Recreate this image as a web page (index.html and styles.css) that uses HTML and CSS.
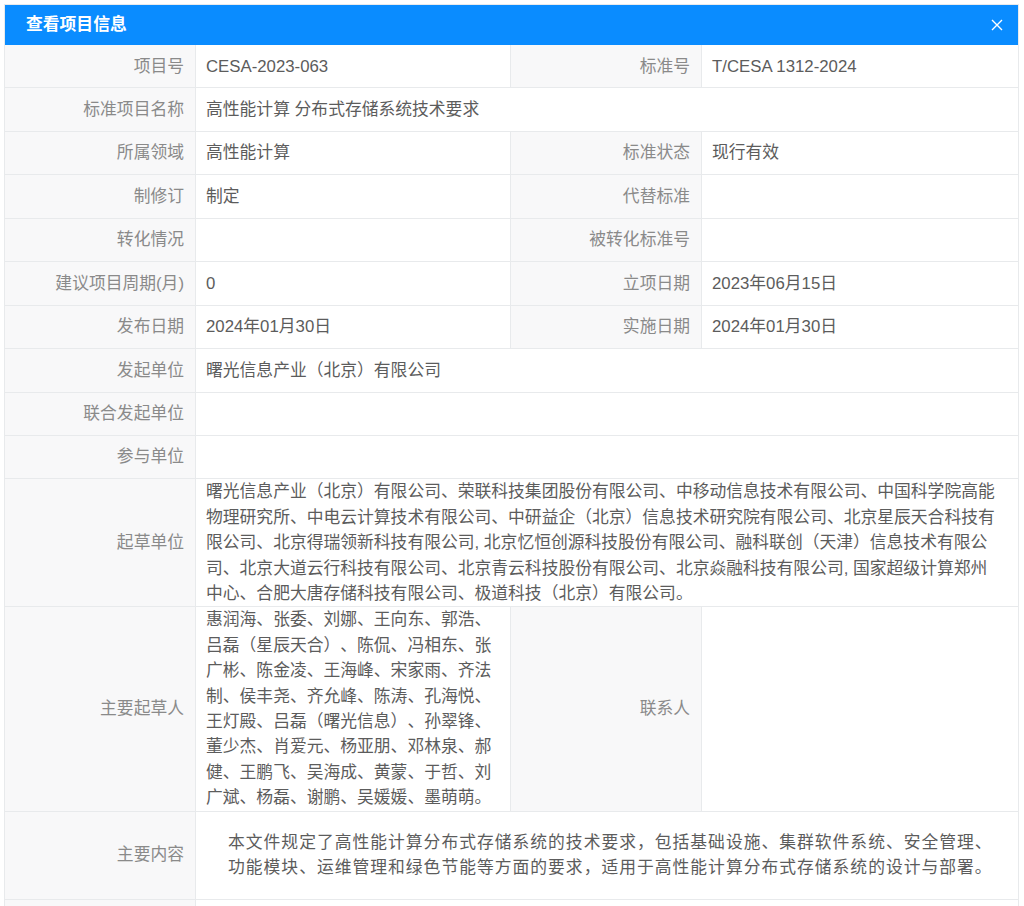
FILE: index.html
```html
<!DOCTYPE html>
<html lang="zh-CN">
<head>
<meta charset="utf-8">
<title>查看项目信息</title>
<link rel="stylesheet" href="styles.css">
</head>
<body>
<div class="modal">
  <div class="modal-header">
    <span class="modal-title">查看项目信息</span>
    <span class="modal-close" aria-label="关闭">
      <svg width="12" height="12" viewBox="0 0 12 12"><path d="M1 1 L11 11 M11 1 L1 11" stroke="#fff" stroke-width="1.4" fill="none"/></svg>
    </span>
  </div>
  <div class="info-grid">
    <div class="label">项目号</div>
    <div class="value mid">CESA-2023-063</div>
    <div class="label">标准号</div>
    <div class="value">T/CESA 1312-2024</div>

    <div class="label">标准项目名称</div>
    <div class="value span3">高性能计算 分布式存储系统技术要求</div>

    <div class="label">所属领域</div>
    <div class="value mid">高性能计算</div>
    <div class="label">标准状态</div>
    <div class="value">现行有效</div>

    <div class="label">制修订</div>
    <div class="value mid">制定</div>
    <div class="label">代替标准</div>
    <div class="value"></div>

    <div class="label">转化情况</div>
    <div class="value mid"></div>
    <div class="label">被转化标准号</div>
    <div class="value"></div>

    <div class="label">建议项目周期(月)</div>
    <div class="value mid">0</div>
    <div class="label">立项日期</div>
    <div class="value">2023年06月15日</div>

    <div class="label">发布日期</div>
    <div class="value mid">2024年01月30日</div>
    <div class="label">实施日期</div>
    <div class="value">2024年01月30日</div>

    <div class="label">发起单位</div>
    <div class="value span3">曙光信息产业（北京）有限公司</div>

    <div class="label">联合发起单位</div>
    <div class="value span3"></div>

    <div class="label">参与单位</div>
    <div class="value span3"></div>

    <div class="label">起草单位</div>
    <div class="value span3 multi wide">曙光信息产业（北京）有限公司、荣联科技集团股份有限公司、中移动信息技术有限公司、中国科学院高能物理研究所、中电云计算技术有限公司、中研益企（北京）信息技术研究院有限公司、北京星辰天合科技有限公司、北京得瑞领新科技有限公司, 北京忆恒创源科技股份有限公司、融科联创（天津）信息技术有限公司、北京大道云行科技有限公司、北京青云科技股份有限公司、北京焱融科技有限公司, 国家超级计算郑州中心、合肥大唐存储科技有限公司、极道科技（北京）有限公司。</div>

    <div class="label">主要起草人</div>
    <div class="value mid multi">惠润海、张委、刘娜、王向东、郭浩、吕磊（星辰天合）、陈侃、冯相东、张广彬、陈金凌、王海峰、宋家雨、齐法制、侯丰尧、齐允峰、陈涛、孔海悦、王灯殿、吕磊（曙光信息）、孙翠锋、董少杰、肖爱元、杨亚朋、邓林泉、郝健、王鹏飞、吴海成、黄蒙、于哲、刘广斌、杨磊、谢鹏、吴媛媛、墨萌萌。</div>
    <div class="label">联系人</div>
    <div class="value"></div>

    <div class="label">主要内容</div>
    <div class="value span3 content"><p>本文件规定了高性能计算分布式存储系统的技术要求，包括基础设施、集群软件系统、安全管理、<br>功能模块、运维管理和绿色节能等方面的要求，适用于高性能计算分布式存储系统的设计与部署。</p></div>

    <div class="label"></div>
    <div class="value span3"></div>
  </div>
</div>
</body>
</html>
```

FILE: styles.css
```css
html, body {
  margin: 0;
  padding: 0;
  background: #ffffff;
  overflow: hidden;
}

body {
  font-family: "Liberation Sans", "Noto Sans CJK SC", sans-serif;
  font-size: 16.8px;
  line-height: 25.4px;
  color: #5c5c5c;
  text-spacing-trim: space-all;
}

.modal {
  margin: 4px 5px 0 4px;
  border: 1px solid #e8eaec;
  border-bottom: none;
  background: #fff;
}

.modal-header {
  height: 40px;
  background: #0a8cff;
  display: flex;
  align-items: center;
  justify-content: space-between;
  padding: 0 15px 0 21px;
}

.modal-title {
  color: #ffffff;
  font-weight: bold;
  font-size: 16.8px;
}

.modal-close {
  display: flex;
  align-items: center;
  justify-content: center;
  width: 12px;
  height: 12px;
}

.info-grid {
  display: grid;
  grid-template-columns: 191px 315px 191px 1fr;
}

.label,
.value {
  box-sizing: border-box;
  min-height: 43.45px;
  border-bottom: 1px solid #e8eaec;
  display: flex;
  align-items: center;
}

.label {
  background: #f8f8f9;
  color: #8a8a8a;
  justify-content: flex-end;
  padding-right: 11px;
  border-right: 1px solid #e8eaec;
  white-space: nowrap;
}

.value {
  padding: 0 10px;
  color: #5c5c5c;
}

.value.mid {
  border-right: 1px solid #e8eaec;
}

.span3 {
  grid-column: span 3;
}

.multi {
  display: block;
  padding-top: 0;
  padding-bottom: 0;
}

.wide {
  padding-right: 20px;
}

.content {
  padding: 0 16px 0 32px;
  min-height: 88px;
}

.content p {
  margin: 0;
  letter-spacing: 1px;
  white-space: nowrap;
}
```
